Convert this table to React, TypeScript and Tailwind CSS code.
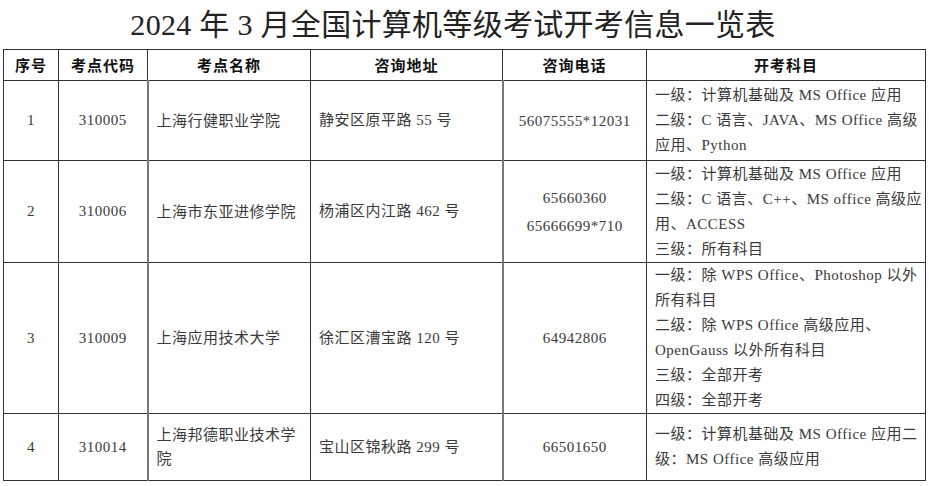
import React from 'react';

interface Row {
  no: string;
  code: string;
  name: string[];
  address: string;
  phones: string[];
  subjects: string[];
  height: string;
}

const rows: Row[] = [
  {
    no: '1',
    code: '310005',
    name: ['上海行健职业学院'],
    address: '静安区原平路 55 号',
    phones: ['56075555*12031'],
    subjects: ['一级：计算机基础及 MS Office 应用', '二级：C 语言、JAVA、MS Office 高级', '应用、Python'],
    height: 'h-[80px]',
  },
  {
    no: '2',
    code: '310006',
    name: ['上海市东亚进修学院'],
    address: '杨浦区内江路 462 号',
    phones: ['65660360', '65666699*710'],
    subjects: ['一级：计算机基础及 MS Office 应用', '二级：C 语言、C++、MS office 高级应', '用、ACCESS', '三级：所有科目'],
    height: 'h-[102px]',
  },
  {
    no: '3',
    code: '310009',
    name: ['上海应用技术大学'],
    address: '徐汇区漕宝路 120 号',
    phones: ['64942806'],
    subjects: [
      '一级：除 WPS Office、Photoshop 以外',
      '所有科目',
      '二级：除 WPS Office 高级应用、',
      'OpenGauss 以外所有科目',
      '三级：全部开考',
      '四级：全部开考',
    ],
    height: 'h-[151px]',
  },
  {
    no: '4',
    code: '310014',
    name: ['上海邦德职业技术学', '院'],
    address: '宝山区锦秋路 299 号',
    phones: ['66501650'],
    subjects: ['一级：计算机基础及 MS Office 应用二', '级：MS Office 高级应用'],
    height: 'h-[67px]',
  },
];

const headers = ['序号', '考点代码', '考点名称', '咨询地址', '咨询电话', '开考科目'];
const widths = ['w-[55px]', 'w-[89px]', 'w-[163px]', 'w-[192px]', 'w-[144px]', 'w-[279px]'];

export default function App() {
  return (
    <div className="min-h-screen bg-white pl-[3px]" style={{ fontFamily: '"Liberation Serif", "Noto Sans CJK SC", serif' }}>
      {/* Title */}
      <h1 className="flex h-[49px] items-center justify-center pr-[26px] text-[30px] font-normal tracking-[0.3px] text-[#222]">
        2024 年 3 月全国计算机等级考试开考信息一览表
      </h1>

      <table className="w-[922px] table-fixed border-collapse border border-[#555] text-[15px] tracking-[0.5px] text-[#3a3a3a]">
        <thead>
          <tr className="h-[31px]">
            {headers.map((h, i) => (
              <th
                key={h}
                className={`${widths[i]} border border-[#333] text-center text-[15px] font-bold text-[#111] tracking-[1px]`}
                style={{ fontFamily: '"Noto Sans CJK SC", sans-serif' }}
              >
                {h}
              </th>
            ))}
          </tr>
        </thead>
        <tbody>
          {rows.map((r) => (
            <tr key={r.no} className={r.height}>
              <td className="border border-[#333] text-center">{r.no}</td>
              <td className="border border-r-2 border-[#333] border-r-[#777] text-center">{r.code}</td>
              <td className="border border-[#333] pl-2 leading-[24px]">
                {r.name.map((n) => (
                  <div key={n} className="whitespace-nowrap">{n}</div>
                ))}
              </td>
              <td className="border border-r-2 border-[#333] border-r-[#777] pl-2 whitespace-nowrap">{r.address}</td>
              <td className="border border-[#333] text-center leading-[28px]">
                {r.phones.map((p) => (
                  <div key={p}>{p}</div>
                ))}
              </td>
              <td className="border border-[#333] pl-2 leading-[25px]">
                {r.subjects.map((s) => (
                  <div key={s} className="whitespace-nowrap">{s}</div>
                ))}
              </td>
            </tr>
          ))}
        </tbody>
      </table>
    </div>
  );
}
